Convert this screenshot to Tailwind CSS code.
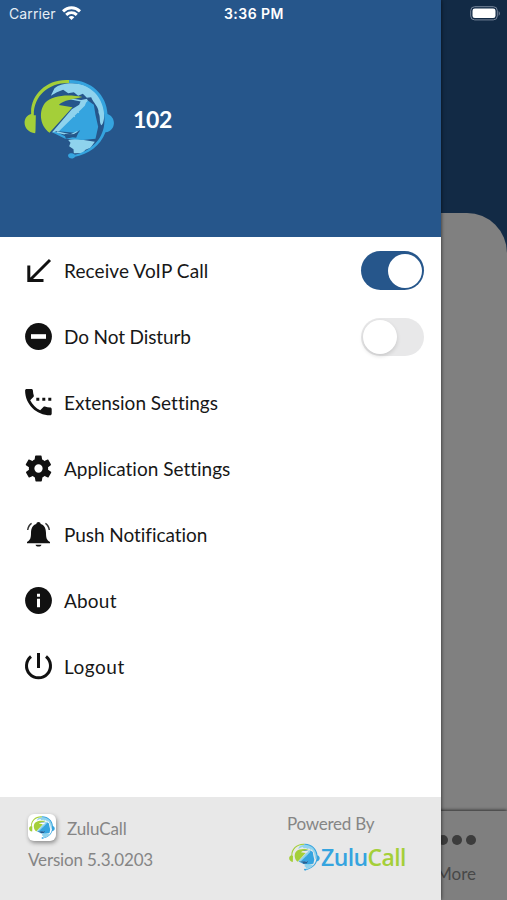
<!DOCTYPE html>
<html lang="en">
<head>
<meta charset="utf-8">
<title>ZuluCall</title>
<script src="https://cdn.jsdelivr.net/npm/@tailwindcss/browser@4"></script>
</head>
<body class="w-[507px] h-[900px] overflow-hidden font-[Lato,sans-serif] [font-variant-ligatures:none]">
<svg class="hidden">
  <symbol id="logo" viewBox="28 28 272 240">
    <path d="M119 56C138 38 190 36 216 50C253 68 272 105 268 140C267 155 264 165 259 167C252 154 258 143 251 129C253 113 235 99 229 83L216 84L204 72L190 78L177 68L160 71L145 60L126 68L108 78Z" fill="#8fd3ed"/>
    <path d="M160 211L185 207L207 211L240 216L227 234L212 240L203 250L177 251L176 239L163 230L167 219Z" fill="#8fd3ed"/>
    <path d="M218 92L237 105L242 136L250 171L242 207L204 211L151 207L112 188Z" fill="#35a4df"/>
    <path d="M199 91L218 87L210 108L130 187L112 188L171 119L193 105Z" fill="#8fd3ed"/>
    <path d="M196 92L128 96L145 84L173 85ZM119 184L190 190L184 204L151 200Z" fill="#24568a"/>
    <path d="M137 91L164 87L202 94M181 119L192 129M169 132L180 141M126 187L166 196L188 186M206 103L218 92" fill="none" stroke="#8fd3ed" stroke-width="4"/>
    <path d="M203 82C160 73 112 77 91 99C72 122 73 166 104 189L173 113L132 106C145 91 177 88 203 82Z" fill="#a4cf39"/>
    <path d="M153 207C174 205 190 196 196 181L178 194L149 193Z" fill="#24568a"/>
    <path d="M163 31C95 26 45 77 49 133C20 141 22 186 61 191L62 183L63 137H57C56 80 99 39 163 40Z" fill="#a4cf39"/>
    <path d="M163 31C227 29 276 76 278 133C306 143 303 183 272 188C257 229 220 254 181 261C175 271 157 266 160 255C167 248 176 252 180 255C229 243 263 209 268 165C276 90 232 39 163 40Z" fill="#35a4df"/>
  </symbol>
</svg>
<div class="relative w-[507px] h-[900px] bg-[#122a45] overflow-hidden flex flex-col">
  <!-- Dimmed screen behind the drawer -->
  <div class="h-[213px] shrink-0"></div>
  <div class="flex-1 bg-[#808080] rounded-tr-[40px] flex flex-col justify-end">
    <div class="h-[89px] bg-[#7f7f7f] shadow-[0_-1px_3px_#333] pt-[24px] pl-[438px]">
      <div class="flex gap-[4px] text-[#3c3c3c]">
        <i class="size-[10px] rounded-full bg-current"></i><i class="size-[10px] rounded-full bg-current"></i><i class="size-[10px] rounded-full bg-current"></i>
      </div>
      <div class="mt-[17px] text-[17px] leading-[24px] text-[#484848] whitespace-nowrap -ml-[2px]">More</div>
    </div>
  </div>

  <!-- Drawer -->
  <aside class="absolute left-0 top-0 w-[441px] h-[900px] bg-white flex flex-col shadow-[0_0_4px_rgba(0,0,0,.7)]">
    <header class="h-[237px] shrink-0 bg-[#26568b] flex items-center pl-[24px]">
      <svg class="w-[91px] h-[80px]"><use href="#logo"/></svg>
      <span class="ml-[18px] pt-[2px] text-[23px] tracking-[-0.4px] font-bold text-white">102</span>
    </header>
    <nav class="flex-1 pt-[0.5px] text-[19px] text-[#171717] whitespace-nowrap">
      <div class="h-[66px] flex items-center pl-[24px] pr-[17px]">
        <svg class="size-[29px] mr-[11px]" viewBox="0 0 29 29" fill="none" stroke="#111" stroke-width="3"><path d="M26 4L5.500 24.500M4.800 9.500V24.500H19.500"/></svg>
        <span class="pt-[2px] tracking-[0.1px]">Receive VoIP Call</span>
        <span class="ml-auto w-[63px] h-[39px] rounded-full bg-[#26568b] flex items-center justify-end pr-[2px]"><i class="size-[34px] rounded-full bg-white"></i></span>
      </div>
      <div class="h-[66px] flex items-center pl-[24px] pr-[17px]">
        <svg class="size-[29px] mr-[11px]" viewBox="0 0 29 29"><circle cx="14.500" cy="14.500" r="13.400" fill="#111"/><path d="M7 12.200h15v4.600H7z" fill="#fff"/></svg>
        <span class="pt-[2px] tracking-[-0.12px]">Do Not Disturb</span>
        <span class="ml-auto w-[63px] h-[38px] rounded-full bg-[#e8e8e9] flex items-center pl-[2px]"><i class="size-[34px] rounded-full bg-white shadow-[0_2px_4px_rgba(0,0,0,.14)]"></i></span>
      </div>
      <div class="h-[66px] flex items-center pl-[24px]">
        <svg class="size-[29px] mr-[11px]" viewBox="0 0 29 29" fill="#111"><path d="M2.600 1h4.800c.8 0 1.400.6 1.500 1.400.1 1.800.4 3.500.9 5.200.2.500.1 1.100-.4 1.500L6.200 12.300c2.100 4.400 5.600 7.900 10 10l3.200-3.300c.4-.4 1-.5 1.500-.4 1.700.5 3.400.9 5.300.9.8 0 1.500.7 1.500 1.500v4.800c0 .8-.7 1.500-1.500 1.500C12.200 27.300 1.100 16.200 1.100 2.500 1.100 1.600 1.800 1 2.600 1ZM12.300 9.800h3v3h-3zM18.300 9.800h3v3h-3zM24.300 9.800h3v3h-3z"/></svg>
        <span class="pt-[2px]">Extension Settings</span>
      </div>
      <div class="h-[66px] flex items-center pl-[24px]">
        <svg class="size-[31px] -ml-px mr-[10px]" viewBox="0 0 24 24" fill="#111"><path fill-rule="evenodd" d="M19.400 13a7.500 7.500 0 0 0 0-2l2.100-1.600c.2-.2.200-.4.100-.6l-2-3.500c-.1-.2-.4-.3-.6-.2l-2.500 1a7.300 7.300 0 0 0-1.700-1l-.4-2.600c0-.3-.2-.5-.5-.5h-4c-.2 0-.4.200-.5.400l-.4 2.700c-.6.200-1.200.6-1.700 1l-2.500-1c-.2-.1-.5 0-.6.200l-2 3.500c-.1.200-.1.500.1.600L4.600 11a8 8 0 0 0 0 2l-2.100 1.600c-.2.200-.2.400-.1.600l2 3.500c.1.200.4.300.6.200l2.500-1c.5.400 1.100.7 1.700 1l.4 2.600c0 .3.200.5.500.5h4c.2 0 .4-.2.500-.5l.4-2.600c.6-.2 1.200-.6 1.700-1l2.500 1c.2.100.5 0 .6-.2l2-3.500c.1-.2.100-.5-.1-.6L19.400 13ZM12 15.200a3.200 3.200 0 1 1 0-6.400 3.200 3.200 0 0 1 0 6.400Z"/></svg>
        <span class="pt-[2px]">Application Settings</span>
      </div>
      <div class="h-[66px] flex items-center pl-[24px]">
        <svg class="size-[29px] mr-[11px]" viewBox="0 0 29 29" fill="#111"><path d="M12.300 4C12.300 1.300 16.700 1.300 16.700 4C20.700 5.200 21.800 8.500 22 13C22.100 18 22.600 20 26 22V23.200H3V22C6.400 20 6.900 18 7 13C7.200 8.500 8.300 5.200 12.300 4ZM11.500 24.700H17.500C17 27.200 12 27.200 11.500 24.700Z"/><path d="M7.600 3.300C5.300 4.700 4.200 6.900 3.700 10M21.400 3.300C23.700 4.700 24.800 6.900 25.300 10" fill="none" stroke="#333" stroke-width="1.500"/></svg>
        <span class="pt-[2px] tracking-[-0.05px]">Push Notification</span>
      </div>
      <div class="h-[66px] flex items-center pl-[24px]">
        <svg class="size-[29px] mr-[11px]" viewBox="0 0 29 29"><circle cx="14.500" cy="14.500" r="13.400" fill="#111"/><path d="M13 7.700h3v3h-3zM13 12.800h3v8.500h-3z" fill="#fff"/></svg>
        <span class="pt-[2px] tracking-[0.2px]">About</span>
      </div>
      <div class="h-[66px] flex items-center pl-[24px]">
        <svg class="size-[29px] mr-[11px]" viewBox="0 0 29 29" fill="none" stroke="#111" stroke-width="3"><path d="M14.500 1V16M7 4.500A12 12 0 1 0 22 4.500"/></svg>
        <span class="pt-[2px] tracking-[0.5px]">Logout</span>
      </div>
    </nav>
    <footer class="h-[103px] shrink-0 bg-[#e8e8e8] flex justify-between pl-[28px] pr-[35px] text-[17px] text-[#858585] whitespace-nowrap">
      <div class="pt-[16px]">
        <div class="flex items-center h-[28px]">
          <span class="w-[28px] h-[27px] rounded-[6px] bg-white shadow-[1px_2px_4px_rgba(0,0,0,.4)] flex items-center justify-center"><svg class="w-[26px] h-[23px]"><use href="#logo"/></svg></span>
          <span class="ml-[11px] pt-[3px] tracking-[-0.1px]">ZuluCall</span>
        </div>
        <div class="mt-[7px] leading-[24px] tracking-[-0.15px]">Version 5.3.0203</div>
      </div>
      <div class="pt-[15px] w-[119px]">
        <div class="leading-[24px] tracking-[-0.25px]">Powered By</div>
        <div class="flex items-center mt-[6px] h-[30px] pl-[2px]">
          <svg class="w-[31px] h-[28px] shrink-0"><use href="#logo"/></svg>
          <span class="ml-px font-['Open_Sans',sans-serif] font-semibold text-[23px] tracking-[-0.6px] leading-[30px] text-[#35a4df]">Zulu<span class="text-[#a4cf39]">Call</span></span>
        </div>
      </div>
    </footer>
  </aside>

  <!-- Status bar -->
  <div class="absolute inset-x-0 top-0 h-[27px] flex items-center justify-between pl-[9px] pr-[6px] font-[Inter,sans-serif] text-white">
    <div class="flex items-center gap-[6px] w-[90px]">
      <span class="text-[14px] tracking-[0.1px] text-[#e5edf5]">Carrier</span>
      <svg class="w-[19px] h-[15px] shrink-0" viewBox="0 0 19 15" fill="none" stroke="#fff" stroke-width="3"><path d="M1 5.300C6 .6 13 .6 18 5.300M4.200 8.900C7.300 6.100 11.700 6.100 14.800 8.900"/><path d="M6.700 11.200C8.300 9.700 10.700 9.700 12.300 11.200L9.500 14Z" fill="#fff" stroke="none"/></svg>
    </div>
    <span class="absolute left-[224px] text-[14px] font-semibold tracking-[0.45px] whitespace-nowrap">3:36 PM</span>
    <svg class="w-[31px] h-[15px]" viewBox="0 0 31 15"><rect x=".7" y=".7" width="26.600" height="13.200" rx="4" fill="none" stroke="#77859a"/><rect x="2.500" y="2.500" width="23" height="9.600" rx="2.300" fill="#fff"/><path d="M28.700 5V10Q31 7.500 28.700 5Z" fill="#77859a"/></svg>
  </div>
</div>
</body>
</html>
